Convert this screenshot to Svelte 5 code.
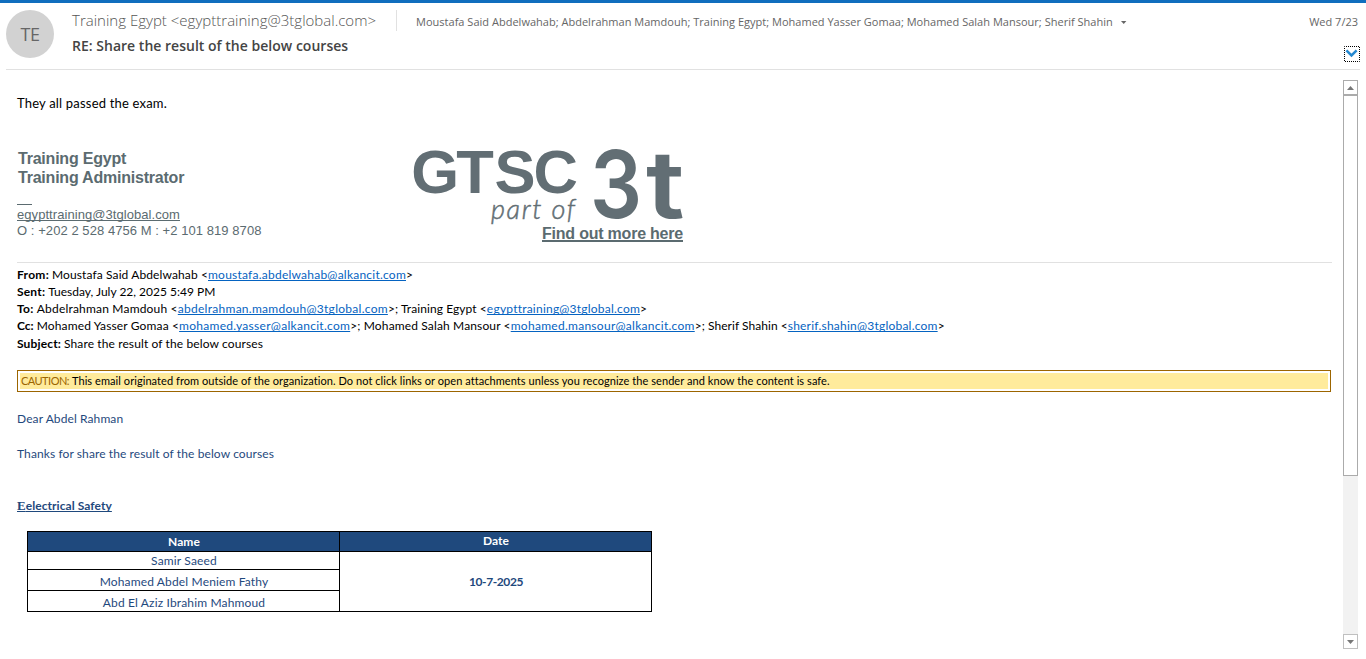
<script>
  const recipients =
    'Moustafa Said Abdelwahab; Abdelrahman Mamdouh; Training Egypt; Mohamed Yasser Gomaa; Mohamed Salah Mansour; Sherif Shahin';

  // Each part is [text, letter spacing in px, kind]
  const quoted = [
    [
      ['From:', 0.27, 'label'],
      ['Moustafa Said Abdelwahab <', 0.11],
      ['moustafa.abdelwahab@alkancit.com', 0.231, 'link'],
      ['>', 0]
    ],
    [
      ['Sent:', 0.2, 'label'],
      ['Tuesday, July 22, 2025 5:49 PM', 0]
    ],
    [
      ['To:', 0.35, 'label'],
      ['Abdelrahman Mamdouh <', 0.19],
      ['abdelrahman.mamdouh@3tglobal.com', 0.275, 'link'],
      ['>; Training Egypt <', 0.08],
      ['egypttraining@3tglobal.com', 0.22, 'link'],
      ['>', 0]
    ],
    [
      ['Cc:', 0, 'label'],
      ['Mohamed Yasser Gomaa <', 0.14],
      ['mohamed.yasser@alkancit.com', 0.285, 'link'],
      ['>; Mohamed Salah Mansour <', 0.135],
      ['mohamed.mansour@alkancit.com', 0.275, 'link'],
      ['>; Sherif Shahin <', 0.039],
      ['sherif.shahin@3tglobal.com', 0.22, 'link'],
      ['>', 0]
    ],
    [
      ['Subject:', 0.143, 'label'],
      ['Share the result of the below courses', 0.115]
    ]
  ];

  const people = ['Samir Saeed', 'Mohamed Abdel Meniem Fathy', 'Abd El Aziz Ibrahim Mahmoud'];
</script>

<div class="window">
  <header>
    <div class="avatar">TE</div>
    <div class="titles">
      <div class="top">
        <span class="sender">Training Egypt &lt;egypttraining@3tglobal.com&gt;</span>
        <span class="rule"></span>
        <span class="recipients">{recipients}</span>
        <svg class="caret" width="6" height="4" viewBox="0 0 6 4"><path d="M0 0h5.4L2.7 3z" fill="#666" /></svg>
      </div>
      <div class="subject">RE: Share the result of the below courses</div>
    </div>
    <div class="side">
      <span class="when">Wed 7/23</span>
      <button class="expand" aria-label="Expand">
        <svg width="16" height="16" viewBox="0 0 16 16">
          <rect x=".5" y=".5" width="15" height="15" fill="none" stroke="#000" stroke-dasharray="1 1" stroke-dashoffset=".5" />
          <path d="M2.4 4.4l5.1 5 5.1-5" fill="none" stroke="#2488d0" stroke-width="2.5" />
        </svg>
      </button>
    </div>
  </header>

  <main>
    <article>
      <p class="reply">They all passed the exam.</p>

      <section class="signature">
        <div class="contact">
          <div class="who">Training Egypt</div>
          <div class="who">Training Administrator</div>
          <div class="dash"></div>
          <div class="mail">egypttraining@3tglobal.com</div>
          <div class="phones">O : +202 2 528 4756 M : +2 101 819 8708</div>
        </div>
        <div class="brand">
          <svg width="276" height="82" viewBox="410 145 276 82" fill="#626e74">
            <text x="411.3 456.3 494.6 533.5" y="193" class="gtsc">GTSC</text>
            <text x="491" y="218.5" class="part" textLength="84">part of</text>
            <text class="mark" transform="translate(590 217.5) scale(.87 1)">3</text>
            <text class="mark" transform="translate(646 217.5) scale(1.16 1)">t</text>
          </svg>
          <div class="more">Find out more here</div>
        </div>
      </section>

      <section class="quoted">
        {#each quoted as row}
          <div class="row">
            {#each row as [text, spacing, kind]}<span class={kind} style:letter-spacing="{spacing}px">{text}</span>{/each}
          </div>
        {/each}
      </section>

      <div class="caution">
        <div><span class="word">CAUTION:</span><span class="note">This email originated from outside of the organization. Do not click links or open attachments unless you recognize the sender and know the content is safe.</span></div>
      </div>

      <p class="blue dear">Dear Abdel Rahman</p>
      <p class="blue thanks">Thanks for share the result of the below courses</p>
      <p class="blue course"><span class="serif">E</span>electrical Safety</p>

      <div class="grid">
        <div class="head">Name</div>
        <div class="head date">Date</div>
        {#each people as person}
          <div class="person">{person}</div>
        {/each}
        <div class="day">10-7-2025</div>
      </div>
    </article>

    <div class="scroll">
      <div class="arrow"><svg width="7" height="4" viewBox="0 0 7 4"><path d="M0 4L3.5 0 7 4z" fill="#777" /></svg></div>
      <div class="thumb"></div>
      <div class="track"></div>
      <div class="arrow down"><svg width="7" height="4" viewBox="0 0 7 4"><path d="M0 0h7L3.5 4z" fill="#777" /></svg></div>
    </div>
  </main>
</div>

<style>
  :global(body) { background: #fff; overflow: hidden; }
  .window {
    box-sizing: border-box;
    width: 1366px;
    height: 659px;
    border-top: 3px solid #106ebe;
    font-family: 'Open Sans', sans-serif;
    white-space: nowrap;
  }
  header {
    display: flex;
    box-sizing: border-box;
    height: 67px;
    margin: 0 6px;
    padding-top: 7px;
    border-bottom: 1px solid #e1e1e1;
  }
  .avatar {
    width: 48px;
    height: 48px;
    border-radius: 50%;
    background: #d2d2d2;
    color: #666;
    font-size: 18px;
    line-height: 49px;
    letter-spacing: -0.4px;
    text-align: center;
  }
  .titles { flex: 1; margin-left: 18px; }
  .top { display: flex; height: 21px; align-items: flex-start; color: #666; }
  .sender { width: 324px; font-size: 15px; font-weight: 300; line-height: 21px; letter-spacing: 0.01px; color: #555; }
  .rule { width: 1px; height: 21px; margin-right: 19px; background: #e1e1e1; }
  .recipients { font-size: 11px; line-height: 24px; letter-spacing: 0.016px; }
  .caret { margin: 11px 0 0 8px; }
  .subject { margin-top: 5px; font-size: 14px; font-weight: 600; line-height: 20px; letter-spacing: 0.015px; color: #444; }
  .side { display: flex; flex-direction: column; align-items: flex-end; }
  .when { margin-right: 2px; font-size: 11px; line-height: 24px; color: #666; }
  .expand { width: 16px; height: 16px; margin-top: 12px; padding: 0; border: 0; background: none; }
  .expand svg { display: block; }

  main { display: flex; justify-content: space-between; padding: 10px 8px 0 17px; }
  article { width: 1315px; font: 12px/17px Lato, sans-serif; color: #000; }
  p { margin: 0; }
  .reply { padding-top: 13px; font-size: 13px; line-height: 20px; letter-spacing: 0.19px; }

  .signature { display: flex; height: 117px; margin-top: 32px; font-family: 'Liberation Sans', sans-serif; color: #5b6b70; }
  .contact { width: 393px; padding-top: 4px; font-size: 13px; line-height: 16px; }
  .who { padding-left: 1px; font-size: 16px; font-weight: 700; line-height: 19px; letter-spacing: -0.22px; }
  .dash { width: 15px; height: 1px; margin: 17px 0 2px; background: #5b6b70; }
  .mail { letter-spacing: 0.063px; text-decoration: underline; text-decoration-skip-ink: none; width: max-content; }
  .phones { letter-spacing: 0.06px; }
  .brand svg { display: block; overflow: visible; }
  .gtsc { font: 700 61.5px 'Liberation Sans', sans-serif; }
  .part { font: italic 300 27px Lato, sans-serif; stroke: #626e74; stroke-width: 0.5px; }
  .mark { font: 600 94px Inter, sans-serif; }
  .more {
    width: 141px;
    height: 15px;
    margin: -2px 0 0 132px;
    border-bottom: 2px solid #5b6b70;
    font-size: 16px;
    font-weight: 700;
    line-height: 17px;
    letter-spacing: -0.217px;
  }

  .quoted { padding-top: 3px; border-top: 1px solid #e1e1e1; }
  .row { height: 17px; }
  .row:last-child { padding-top: 1px; }
  .label { margin-right: 3px; font-weight: 700; }
  .link { color: #0563c1; text-decoration: underline; text-decoration-skip-ink: none; }

  .caution { box-sizing: border-box; width: 1314px; height: 22px; margin-top: 18px; padding: 2px; border: 1px solid #9c6500; font-size: 11px; line-height: 16px; }
  .caution div { height: 16px; padding-left: 1px; background: #ffeb9c; }
  .word { display: inline-block; width: 51px; letter-spacing: -0.53px; color: #9c6500; }
  .note { letter-spacing: 0.063px; }

  .blue { color: #1f497d; letter-spacing: 0.1px; }
  .dear { margin-top: 18px; }
  .thanks { margin-top: 18px; }
  .course { width: max-content; margin-top: 35px; font-weight: 700; letter-spacing: 0.06px; text-decoration: underline; text-decoration-skip-ink: none; }
  .serif { font-family: 'Liberation Serif', serif; font-size: 13px; line-height: 1; }

  .grid {
    display: grid;
    box-sizing: border-box;
    grid-template-columns: 311px 311px;
    grid-template-rows: 19px 17px 20px 20px;
    gap: 1px;
    width: 625px;
    margin: 17px 0 0 10px;
    padding: 1px;
    background: #000;
    color: #1f497d;
    text-align: center;
  }
  .grid > div { box-sizing: border-box; padding-left: 1px; background: #fff; }
  .grid > .head { background: #1f497d; color: #fff; font-weight: 700; line-height: 20px; letter-spacing: 0.08px; }
  .grid > .date { line-height: 18px; }
  .person { grid-column: 1; letter-spacing: 0.15px; line-height: 23px; }
  .grid > .head + .person { line-height: 18px; }
  .day { grid-column: 2; grid-row: 2 / 5; font-weight: 700; line-height: 59px; letter-spacing: -0.4px; }

  .scroll { display: flex; flex-direction: column; width: 15px; height: 569px; }
  .arrow { display: flex; align-items: center; justify-content: center; box-sizing: border-box; height: 15px; border: 1px solid #ababab; background: #fff; }
  .down { border-color: #c0c0c0; }
  .thumb { box-sizing: border-box; height: 381px; border: 1px solid #ababab; background: #fff; }
  .track { flex: 1; background: #f2f2f2; }
</style>
